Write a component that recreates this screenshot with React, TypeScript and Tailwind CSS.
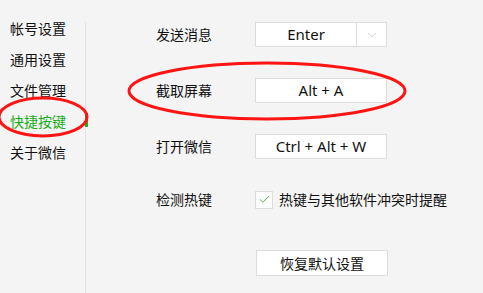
import { ChevronDown, Check } from 'lucide-react'

const font = { fontFamily: '"Segoe UI", "Noto Sans", "Noto Sans CJK SC", sans-serif' }

const menu = ['帐号设置', '通用设置', '文件管理', '快捷按键', '关于微信']

function KeyBox({ value, dropdown }: { value: string; dropdown?: boolean }) {
  return (
    <div className="flex h-[25px] w-[132px] border border-[#dcdcdc] bg-white">
      <div className="flex flex-1 items-center justify-center text-[15px] text-[#111]">{value}</div>
      {dropdown && (
        <div className="flex w-[30px] items-center justify-center border-l border-[#dcdcdc]">
          <ChevronDown className="h-[14px] w-[14px] text-[#c8c8c8]" strokeWidth={1.5} />
        </div>
      )}
    </div>
  )
}

export default function App() {
  return (
    <div className="relative flex h-[293px] w-[483px] overflow-hidden bg-[#f4f4f4]" style={font}>
      <div className="flex w-[85px] flex-col pl-[10px] pt-[13px]">
        {menu.map((item) => (
          <div
            key={item}
            className={`h-[31px] text-[14px] leading-[31px] ${item === '快捷按键' ? 'text-[#1aad19]' : 'text-[#111]'}`}
          >
            {item}
          </div>
        ))}
      </div>
      <div className="mt-[22px] w-px bg-[#e2e2e2]">
        <div className="mt-[91px] h-[14px] w-[3px] bg-[#1aad19]" />
      </div>

      <div className="flex flex-col pl-[70px] text-[14px] text-[#111]">
        <div className="mt-[22px] flex h-[25px] items-center">
          <div className="w-[99px]">发送消息</div>
          <KeyBox value="Enter" dropdown />
        </div>
        <div className="mt-[31px] flex h-[25px] items-center">
          <div className="w-[99px]">截取屏幕</div>
          <KeyBox value="Alt + A" />
        </div>
        <div className="mt-[31px] flex h-[25px] items-center">
          <div className="w-[99px]">打开微信</div>
          <KeyBox value="Ctrl + Alt + W" />
        </div>
        <div className="mt-[28px] flex h-[25px] items-center">
          <div className="w-[99px]">检测热键</div>
          <div className="flex h-[18px] w-[18px] items-center justify-center border border-[#dcdcdc] bg-white">
            <Check className="h-[13px] w-[13px] text-[#1aad19]" strokeWidth={1.5} />
          </div>
          <div className="ml-[6px]">热键与其他软件冲突时提醒</div>
        </div>
        <div className="ml-[100px] mt-[38px] flex h-[26px] w-[132px] items-center justify-center border border-[#dcdcdc] bg-white">
          恢复默认设置
        </div>
      </div>

      <svg className="pointer-events-none absolute left-0 top-0" width="483" height="293">
        <ellipse cx="43" cy="117" rx="44" ry="19" fill="none" stroke="#ff1414" strokeWidth="3" />
        <ellipse cx="267" cy="91" rx="138" ry="28" fill="none" stroke="#ff1414" strokeWidth="3" />
      </svg>
    </div>
  )
}
